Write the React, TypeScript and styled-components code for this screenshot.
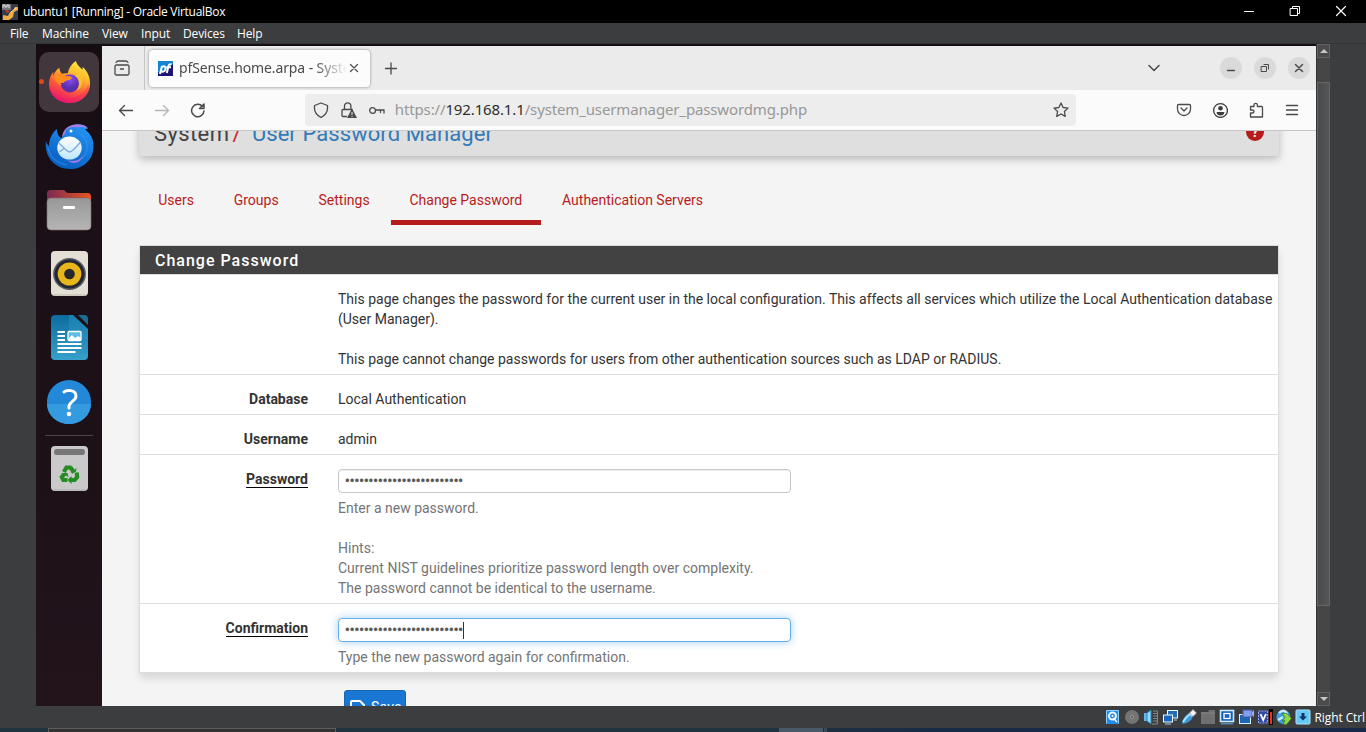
import React from "react";
import styled, { createGlobalStyle } from "styled-components";

const GlobalStyle = createGlobalStyle`
  * { box-sizing: border-box; }
  html, body { margin: 0; padding: 0; background: #3c3d3f; overflow: hidden; }
  svg { display: block; flex: none; }
`;

const ui = `"Open Sans", "Noto Sans", sans-serif`;
const ubuntu = `"Noto Sans", "Open Sans", sans-serif`;

const Host = styled.div`
  width: 1366px; height: 732px; display: flex; flex-direction: column;
  background: #3c3d3f; color: #fff; font-family: ${ui}; overflow: hidden;
`;
const TitleBar = styled.header`
  height: 23px; flex: none; background: #000; display: flex; align-items: center;
  padding: 0 19px 0 2px; font-size: 12px; letter-spacing: -0.28px;
`;
const TitleText = styled.span`margin-left: 5px; flex: 1; line-height: 23px; white-space: nowrap;`;
const TitleButtons = styled.div`display: flex; gap: 34px; align-items: center; height: 20px; margin-top: -2px;`;
const MenuBar = styled.nav`
  height: 21px; flex: none; display: flex; background: #3c3d3f; border-bottom: 1px solid #343537;
  font-size: 12px; padding-left: 10px; line-height: 21px;
`;
const MenuItem = styled.span<{ $w: number; $ls?: number }>`
  width: ${p => p.$w}px; letter-spacing: ${p => p.$ls ?? -0.13}px; white-space: nowrap;
`;
const Viewport = styled.div`height: 662px; flex: none; display: flex; padding-left: 36px;`;
const Desktop = styled.div`
  width: 1280px; display: flex; background: linear-gradient(#160d13, #1c1018 30%, #1d1118 65%, #23141c);
`;
const Dock = styled.aside`
  width: 66px; padding-top: 8px; display: flex; flex-direction: column; align-items: center; gap: 4px;
`;
const DockItem = styled.div<{ $active?: boolean; $lift?: number }>`
  width: 60px; height: 60px; border-radius: 10px; display: flex; align-items: center; justify-content: center;
  position: relative; background: ${p => (p.$active ? "#42373d" : "transparent")};
  padding-bottom: ${p => p.$lift ?? 0}px;
`;
const ActiveDot = styled.i`
  position: absolute; left: 0; top: 27px; width: 5px; height: 5px; border-radius: 50%; background: #dd4814;
`;
const DockRule = styled.div`width: 48px; height: 1px; background: #4c4348; margin: -1px 0 0;`;

const Browser = styled.main`
  width: 1214px; margin-top: 2px; height: 660px; display: flex; flex-direction: column; overflow: hidden;
  background: #f4f4f4; color: #212529;
`;
const TabStrip = styled.div`height: 44px; flex: none; background: #ebebeb; display: flex; align-items: center;`;
const ViewButton = styled.div`
  width: 43px; height: 44px; border-right: 1px solid #c4c4c4; display: flex; align-items: center; padding-left: 12px;
`;
const Tab = styled.div`
  width: 221px; height: 37px; margin: 0 0 0 4px; background: #fcfcfc; border-radius: 4px;
  box-shadow: 0 0 3px rgba(0,0,0,.42); display: flex; align-items: center; padding-left: 9px;
  font: 14px/36px ${ubuntu}; color: #4b4b4b;
`;
const TabTitle = styled.span`
  width: 167px; margin-left: 6px; overflow: hidden; white-space: nowrap; letter-spacing: -.11px;
  mask-image: linear-gradient(90deg, #000 136px, transparent 168px);
`;
const NewTab = styled.div`margin-left: 13px; flex: 1;`;
const WindowButtons = styled.div`display: flex; gap: 12px; margin-left: 58px; padding-right: 6px;`;
const RoundButton = styled.div`
  width: 22px; height: 22px; border-radius: 50%; background: #dadada; display: flex; align-items: center; justify-content: center;
`;
const Toolbar = styled.div`
  height: 41px; flex: none; background: #fbfbfb; border-bottom: 1px solid #c6c6c6; display: flex; align-items: center;
  padding: 0 16px;
`;
const NavButtons = styled.div`display: flex; gap: 20px; width: 187px;`;
const UrlBar = styled.div`
  width: 772px; height: 32px; background: #ededed; border-radius: 4px; display: flex; align-items: center;
  padding: 0 7px 0 8px; color: #5b5b5b;
`;
const UrlIcons = styled.div`display: flex; gap: 12px; width: 82px;`;
const Url = styled.span`
  flex: 1; font: 15px/30px ${ubuntu}; color: #989898; letter-spacing: -.135px; white-space: nowrap; height: 32px;
  b { font-weight: 400; color: #2d2d2d; }
`;
const ToolIcons = styled.div`display: flex; gap: 20px; margin-left: 100px;`;

const Page = styled.div`
  flex: 1; min-height: 0; overflow: hidden; padding: 0 37px; font: 14px/20px Roboto, sans-serif; color: #212121;
`;
const PageHeader = styled.div`
  margin-top: -24px; height: 49px; background: #dfdfdf; border-radius: 0 0 3px 3px;
  box-shadow: 0 3px 8px rgba(0,0,0,.25); display: flex; justify-content: space-between; align-items: center;
  padding: 3px 15px 0;
`;
const Crumbs = styled.h1`
  margin: 1px 0 0; padding-top: 1px; font: 400 22px/26px Roboto, sans-serif; letter-spacing: .4px; color: #424242; display: flex;
`;
const Slash = styled.span`color: #c62828; margin: 0 10px 0 3px;`;
const Crumb = styled.span`color: #337ab7; letter-spacing: .07px;`;
const HelpBadge = styled.div`
  width: 18px; height: 18px; border-radius: 50%; background: #b71c1c; color: #eee; font: 700 14px/18px Roboto, sans-serif;
  text-align: center; margin: -2px 0 0;
`;
const Tabs = styled.nav`display: flex; gap: 2.65px; margin: 19px 0 0 .6px; height: 50px;`;
const PageTab = styled.a<{ $on?: boolean }>`
  padding: 15px 18.6px 0; color: #b71c1c; white-space: nowrap;
  border-bottom: 5px solid ${p => (p.$on ? "#b71c1c" : "transparent")};
`;
const Panel = styled.section`
  margin-top: 20px; border: 1px solid #dcdcdc; background: #fff; box-shadow: 0 6px 8px -1px rgba(0,0,0,.13);
`;
const PanelTitle = styled.h2`
  margin: 0; height: 29px; border-bottom: 1px solid #dcdcdc; background: #424242; color: #fff;
  font: 500 16px/28px Roboto, sans-serif; letter-spacing: 1px; padding: 1px 0 0 15px;
`;
const Row = styled.div`
  display: grid; grid-template-columns: 168px 1fr; column-gap: 30px; padding: 14px 4px 5px 0;
  border-bottom: 1px solid #dedede;
  &:last-child { border-bottom: 0; }
`;
const Label = styled.div`text-align: right; font-weight: 700; color: #333;`;
const Required = styled.span`border-bottom: 1px solid #000;`;
const Value = styled.div`white-space: pre-line; color: #333;`;
const Field = styled.div<{ $focus?: boolean }>`
  width: 453px; height: 24px; border-radius: 4px; background: #fff; color: #555; padding: 0 6px; line-height: 21px;
  display: flex; align-items: center; border: 1px solid ${p => (p.$focus ? "#66afe9" : "#c8c8c8")};
  box-shadow: ${p => (p.$focus ? "0 0 8px rgba(102,175,233,.6)" : "inset 0 1px 1px rgba(0,0,0,.075)")};
  -webkit-text-stroke: .5px #555;
`;
const Caret = styled.i`width: 1px; height: 17px; background: #333;`;
const Hint = styled.div`margin-top: 5px; color: #757575; white-space: pre-line;`;
const SaveButton = styled.button`
  margin: 17px 0 0 205px; width: 62px; height: 34px; border: 1px solid #1565b0; border-radius: 3px; background: #1976d2;
  color: #fff; font: 14px/20px Roboto, sans-serif; padding: 0 4px; display: flex; align-items: center; gap: 6px;
  letter-spacing: .2px;
`;

const ScrollTrack = styled.div`
  width: 14px; background: #464646; border-left: 1px solid #323232; display: flex; flex-direction: column;
`;
const ScrollArrow = styled.div`
  height: 14px; border: 1px solid #626262; background: #4b4b4b; display: flex; align-items: center; justify-content: center;
`;
const ScrollThumb = styled.div`
  height: 524px; margin: 24px 0 auto; border: 1px solid #666; background: linear-gradient(90deg, #4b4c4d, #545556);
`;
const StatusBar = styled.footer`
  height: 22px; flex: none; display: flex; align-items: center; padding-left: 1104.500px; gap: 3.100px;
  font-size: 12px; background: #3c3d3f;
`;
const HostKey = styled.span`white-space: nowrap; letter-spacing: -.1px; line-height: 20px; padding-top: 1px;`;
const Taskbar = styled.div`height: 4px; flex: none; display: flex; background: linear-gradient(90deg, #20343f, #20343f 55%, #172a46 70%, #182848);`;
const TaskSlot = styled.div`margin-left: 48px; width: 288px; border: 1px solid #5e5e5e; border-bottom: 0; background: #333232;`;
const TaskActive = styled.div`margin-left: 443px; width: 44px; background: #4a5968;`;
const TaskEdge = styled.div`margin-left: 1px; width: 3px; background: #3c4a58;`;

const Line = ({ d, size = 16, w = 1.3, c = "#4a4a4a" }: { d: string; size?: number; w?: number; c?: string }) => (
  <svg width={size} height={size} viewBox={`0 0 ${size} ${size}`} fill="none" stroke={c} strokeWidth={w} strokeLinecap="round" strokeLinejoin="round">
    <path d={d} />
  </svg>
);

const FirefoxIcon = () => (
  <svg width="43" height="44" viewBox="0 0 44 46" preserveAspectRatio="none">
    <defs>
      <linearGradient id="ffBody" x1=".8" y1="0" x2=".35" y2="1">
        <stop offset="0" stopColor="#fff04a" /><stop offset=".35" stopColor="#ffb52b" />
        <stop offset=".65" stopColor="#ff5b38" /><stop offset="1" stopColor="#e9136f" />
      </linearGradient>
      <radialGradient id="ffOrb" cx=".5" cy=".25"><stop offset="0" stopColor="#8b50f5" /><stop offset="1" stopColor="#5a2fae" /></radialGradient>
    </defs>
    <path d="M28.500 1c.8 4 4.200 6.500 6.700 9 .5-1 .3-2 0-3 5.500 5 8 11 7.800 18C42.600 36.500 33.500 45 22 45S1 36.500 1 25c0-5 1.700-9.500 4.500-12.500V17c1-4 3-7.500 6.200-9 0 2.800 1 4.800 2.700 6.500 2-.7 4-.8 6-.6C21 9 24 4 28.500 1z" fill="url(#ffBody)" />
    <path d="M1.500 28c3 9 11 13 20 12C32 38.500 39 33 41 25c3 8-4 19.500-18 19.500C11 44.500 3 38 1.500 28z" fill="#f1166f" opacity=".38" />
    <circle cx="22.500" cy="24.500" r="9.500" fill="url(#ffOrb)" />
    <path d="M6 17c4-3 9-3 12 0 3-1 6 0 6.500 2-1 2-5 1.700-7 3.500-2 2-4 2-6 1l3 3c-4-.5-8-4-8.500-9.500z" fill="#ff8d20" />
    <path d="M26 7c5 5 9 9 9 16 0 5-3 8-6 9 4-5 3-12-1-15 2-1 1-6-2-10z" fill="#ffc734" opacity=".75" />
  </svg>
);
const ThunderbirdIcon = () => (
  <svg width="49" height="47" viewBox="0 0 49 47">
    <defs>
      <linearGradient id="tbBody" x1=".8" y1="0" x2=".3" y2="1"><stop offset="0" stopColor="#2594f5" /><stop offset="1" stopColor="#075cbf" /></linearGradient>
      <linearGradient id="tbMail" x1="0" y1="0" x2="0" y2="1"><stop offset="0" stopColor="#fff" /><stop offset="1" stopColor="#bfe6ff" /></linearGradient>
    </defs>
    <path d="M1 18c.5 3 2 4 3 5C4 16 7 10 12 6c0 4 1 7 4 9 4-2 3-12 16-13.500 5-.5 9 .5 11 4-1 0-2 .2-3 .7 6 5 8.500 10 8.500 17C48.500 37 38 46 25 46 9 46-1 33 1 18z" fill="url(#tbBody)" />
    <path d="M17 14C18 6 24 1 33 1.200c5 .2 8 1.600 10 4.300-4-1.700-7-2-10-1-3-1-8-1-11 2-2 2-1 5-5 7.500z" fill="#a37ee9" />
    <path d="M36 11c9 7 7 18 1 25M3 25c2 9 8 15 19 17" fill="none" stroke="#45a5ff" strokeWidth="1.500" opacity=".35" />
    <path d="M22 37c6 2 13 1 16-5-1 7-9 11-16 5z" fill="#9979df" />
    <ellipse cx="24.500" cy="25" rx="12.200" ry="11.500" fill="url(#tbMail)" />
    <path d="M14 20c4 4 8 9 10.500 9s7-5 11-10M14 29l6-4" fill="none" stroke="#7eabd8" strokeWidth="1.300" />
    <circle cx="26" cy="8" r="1.500" fill="#fff" />
  </svg>
);
const FilesIcon = () => (
  <svg width="46" height="42" viewBox="0 0 46 42">
    <defs>
      <linearGradient id="fiBack"><stop offset="0" stopColor="#7b2a55" /><stop offset="1" stopColor="#e95420" /></linearGradient>
      <linearGradient id="fiFront" x1="0" y1="0" x2="0" y2="1"><stop offset="0" stopColor="#989898" /><stop offset="1" stopColor="#b5b5b5" /></linearGradient>
    </defs>
    <path d="M1 5c0-3 1-4 4-4h12c2 0 3 3 5 3h19c3 0 4 1 4 4v15H1z" fill="url(#fiBack)" />
    <rect x="1" y="9" width="44" height="32" rx="4" fill="url(#fiFront)" stroke="#81716c" strokeWidth=".6" />
    <rect x="17" y="17" width="12" height="3" rx="1" fill="#fff" />
  </svg>
);
const MusicIcon = () => (
  <svg width="37" height="45" viewBox="0 0 36 45" preserveAspectRatio="none">
    <rect width="36" height="45" rx="4" fill="#e4dfd5" /><path d="M2 44h32" stroke="#bbb5aa" />
    <circle cx="18" cy="23" r="16" fill="#5a5e66" /><circle cx="18" cy="23" r="14.500" fill="#242631" />
    <circle cx="18" cy="23" r="11.500" fill="#e7b51c" /><circle cx="18" cy="23" r="5.200" fill="#282828" />
  </svg>
);
const WriterIcon = () => (
  <svg width="37" height="45" viewBox="0 0 37 45">
    <defs><linearGradient id="wr" x1="0" y1="0" x2="0" y2="1"><stop offset="0" stopColor="#0d6c9e" /><stop offset="1" stopColor="#37a0cd" /></linearGradient></defs>
    <path d="M4 0h18l15 14v27q0 4-4 4H4q-4 0-4-4V4q0-4 4-4z" fill="url(#wr)" />
    <path d="M18 0h4l15 14v10H18z" fill="#2994c2" opacity=".5" />
    <path d="M27 0h6q4 0 4 4v6z" fill="#176d94" />
    <path d="M6.500 17h7.500M6.500 21h7.500M6.500 25h7.500M6.500 29h24M6.500 33h24M6.500 37h18" stroke="#fff" strokeWidth="2" />
    <rect x="17" y="16.500" width="13" height="9" rx="1" fill="#5bbce9" stroke="#fff" strokeWidth="1.300" />
    <path d="M18 25v-2l3-3 3 3 3-2 3 2v2z" fill="#fff" />
  </svg>
);
const HelpIcon = () => (
  <svg width="44" height="44" viewBox="0 0 44 44">
    <circle cx="22" cy="22" r="22" fill="#2488d9" /><path d="M0 24h44a22 20 0 0 1-44 0z" fill="#349be1" />
    <path d="M17 12c2-2 12-3 12 4 0 5-6 5-7 10v2" fill="none" stroke="#fff" strokeWidth="3" strokeLinecap="round" /><circle cx="22" cy="34" r="2.300" fill="#fff" />
  </svg>
);
const TrashIcon = () => (
  <svg width="37" height="45" viewBox="0 0 36 45" preserveAspectRatio="none">
    <rect width="36" height="45" rx="4" fill="#cacaca" /><path d="M2 44h32" stroke="#aaa" />
    <rect x="3" y="3" width="30" height="6" rx="2.500" fill="#777" />
    <g transform="translate(18 28)" fill="none" stroke="#268b22" strokeWidth="4">
      <path d="M-5.500-2-3-6.500H2" /><path d="M1-6.500l3.500 5" /><path d="M7-1.500 7.500 3 5 6H1" /><path d="M-2 6h-4L-7.500 3-5 0" />
      <path d="M1-1 6-2 7-6zM2 2v8l-4-4zM-8-1h6l1 4z" fill="#268b22" stroke="none" />
    </g>
  </svg>
);
const VBoxIcon = () => (
  <svg width="16" height="16" viewBox="0 0 16 16">
    <rect width="16" height="16" fill="#343b4b" /><rect width="9" height="6" fill="#777" />
    <path d="M1 4V1h2v2h2V1h2v3" fill="none" stroke="#ddd" /><path d="M1 11l5 1 2-4 3-1 2-4h3v3l-4 2-1 5-4 3H1z" fill="#efae45" />
    <path d="M3 6l5 1-3 2z" fill="#d23e25" /><path d="M9 8l5-4" stroke="#ffe38b" />
  </svg>
);
const PfIcon = () => (
  <svg width="15" height="15" viewBox="0 0 15 15">
    <rect width="15" height="15" fill="#1685d1" /><path d="M0 15 15 3v12z" fill="#1c1672" /><path d="M0 11l5 4H0z" fill="#1c1672" />
    <path d="M2 13 4 5M3.700 6c3-2 4.500 0 3.500 3-.6 2-2.800 2-4.200 1M8.800 12l1.800-7.200q.5-2 3-1.600M8.500 6.200h4.500" fill="none" stroke="#fff" strokeWidth="2" />
  </svg>
);

const statusIcons: React.ReactNode[] = [
  <><rect x="1" y="1" width="13" height="14" rx="1" fill="#1f8be6" /><path d="M1.500 14.500v-13h12v13" stroke="#8fd0ff" fill="none" /><circle cx="7.500" cy="7" r="4.500" fill="#e8f5ff" /><circle cx="7.500" cy="7" r="1.800" fill="none" stroke="#177acf" strokeWidth="1.300" /><path d="M8 9l4 4" stroke="#fff" strokeWidth="1.500" /></>,
  <><circle cx="8" cy="8" r="7" fill="#747474" /><circle cx="8" cy="8" r="2" fill="#929292" /><circle cx="8" cy="8" r=".8" fill="#333" /></>,
  <><path d="M1 4h3v8H1z" fill="#64b6e8" /><path d="M4 4l4-3v14l-4-3z" fill="#8fdcff" stroke="#2585bd" /><path d="M10 2h4.500v13H9M10 4.500h4M10 7h4M10 9.500h4M10 12h4" stroke="#858585" fill="none" /></>,
  <><rect x="5.500" y="1.500" width="10" height="7.500" fill="#286db8" stroke="#eef8ff" /><rect x="1.500" y="6" width="9" height="7" fill="#1a66bd" stroke="#eef8ff" /><path d="M3 15h6M12 11h3" stroke="#a6d0ee" /></>,
  <><path d="M1 15q0-6 7-11l4 4q-3 6-11 7z" fill="#3b9bdd" /><path d="M2 13q3-5 7-8l2 2" fill="none" stroke="#a4dfff" strokeWidth="2" /><path d="M8.500 4l3.500-3.500L15.500 4 12 7.500z" fill="#f4f4f4" stroke="#999" strokeWidth=".7" /></>,
  <><path d="M1 3h7l1-2h6v14H1z" fill="#707070" /><path d="M1 4h14" stroke="#838383" /></>,
  <><rect x="1.500" y="1.500" width="13" height="11" fill="#155eb2" stroke="#c8ecff" strokeWidth="1.600" /><rect x="5" y="4.500" width="6" height="5" fill="#1767bd" stroke="#fff" strokeWidth="1.300" /><path d="M2 14.800h12" stroke="#65aee3" /></>,
  <><rect x="1.500" y="5.500" width="11" height="9" fill="#1e66b4" stroke="#d9eef8" /><rect x="5" y="1" width="9" height="7" fill="#879cf0" stroke="#435c9c" /><path d="M14 3l2-2v7l-2-2" fill="#9baeff" /></>,
  <><path d="M1.500 2h9v12h-9z" fill="#3149a0" stroke="#8fa6fd" strokeDasharray="2 1" /><path d="M3.500 5l2.700 6 2.700-6" stroke="#fff" strokeWidth="1.800" fill="none" /><path d="M12 0h4v16h-4z" fill="#000" /><path d="M13 3h2v12h-2z" fill="#ff2e13" /></>,
  <><circle cx="7.500" cy="8" r="7" fill="#3c9de0" /><path d="M3 4c4-4 7-2 8 1M2 11l5-3" stroke="#c3edff" strokeWidth="2.400" fill="none" /><path d="M6 4.500h5l4.500 5-5 6H7l2-4-3 .5 3-3.500z" fill="#91d844" stroke="#2a762a" strokeWidth=".7" /></>,
  <><rect x="1" y="1" width="14" height="14" rx="1" fill="#67c8f4" stroke="#aae6ff" /><path d="M6.500 4h3v3.500h2.500l-4 4-4-4h2.500z" fill="#0b3566" /></>,
];

const dots = "•".repeat(25);
const pageTabs = ["Users", "Groups", "Settings", "Change Password", "Authentication Servers"];

export default function App() {
  return (
    <Host>
      <GlobalStyle />
      <TitleBar>
        <VBoxIcon />
        <TitleText>ubuntu1 [Running] - Oracle VirtualBox</TitleText>
        <TitleButtons>
          <Line size={12} c="#fff" w={1} d="M1.500 6.500h9" />
          <Line size={12} c="#fff" w={1} d="M1.500 3.500h7v7h-7zM3.500 3V1.500h7v7H9" />
          <Line size={12} c="#fff" w={1.200} d="M1.500 1.500l9 9M10.500 1.500l-9 9" />
        </TitleButtons>
      </TitleBar>
      <MenuBar>
        <MenuItem $w={32}>File</MenuItem>
        <MenuItem $w={60}>Machine</MenuItem>
        <MenuItem $w={39}>View</MenuItem>
        <MenuItem $w={42}>Input</MenuItem>
        <MenuItem $w={54}>Devices</MenuItem>
        <MenuItem $w={40}>Help</MenuItem>
      </MenuBar>
      <Viewport>
        <Desktop>
          <Dock>
            <DockItem $active $lift={1}><ActiveDot /><FirefoxIcon /></DockItem>
            <DockItem><ThunderbirdIcon /></DockItem>
            <DockItem><FilesIcon /></DockItem>
            <DockItem $lift={1}><MusicIcon /></DockItem>
            <DockItem $lift={1}><WriterIcon /></DockItem>
            <DockItem><HelpIcon /></DockItem>
            <DockRule />
            <DockItem $lift={3}><TrashIcon /></DockItem>
          </Dock>
          <Browser>
            <TabStrip>
              <ViewButton><Line d="M2.500 5h11q1.500 0 1.500 1.500v7q0 1.500-1.500 1.500h-11Q1 15 1 13.500v-7Q1 5 2.500 5zM2 2.500Q3 1 4 1h8q1 0 2 1.500M6.500 9h3" /></ViewButton>
              <Tab>
                <PfIcon />
                <TabTitle>pfSense.home.arpa - System: User</TabTitle>
                <Line size={16} w={1.200} d="M4.500 4.500l7 7M11.500 4.500l-7 7" />
              </Tab>
              <NewTab><Line w={1.300} d="M2.500 8.500h11M8 3v11" /></NewTab>
              <Line w={1.500} d="M3 5.500l5 5 5-5" />
              <WindowButtons>
                <RoundButton><Line d="M4.500 10.500h7" /></RoundButton>
                <RoundButton><Line w={1} d="M4.500 6.500h5v5h-5zM7 4.500h4.500V9" /></RoundButton>
                <RoundButton><Line w={1.500} d="M4.500 4.500l7 7M11.500 4.500l-7 7" /></RoundButton>
              </WindowButtons>
            </TabStrip>
            <Toolbar>
              <NavButtons>
                <Line w={1.400} d="M14.500 8.500h-13M6.500 3.500l-5 5 5 5" />
                <Line w={1.400} c="#b5b5b5" d="M1.500 8.500h13M9.500 3.500l5 5-5 5" />
                <Line w={1.500} d="M14 9A6.200 6.200 0 1 1 12.500 4.500M14 2v4.500H9.500z" />
              </NavButtons>
              <UrlBar>
                <UrlIcons>
                  <Line d="M8 1l6.500 2.500v3c0 4-3 7-6.500 9-3.500-2-6.500-5-6.500-9v-3z" />
                  <svg width="16" height="16" viewBox="0 0 16 16"><path d="M3.500 7V4a3.200 3.200 0 0 1 6.400 0v3M6 14.500H2q-1 0-1-1v-5q0-1 1-1h9.500" fill="none" stroke="#4a4a4a" strokeWidth="1.300" /><path d="M11 6.500 16 16H6z" fill="#4a4a4a" /><path d="M11 10v3M11 14v1" stroke="#eee" /></svg>
                  <Line d="M6.500 8.500a2.900 2.900 0 1 1-5.800 0a2.900 2.900 0 1 1 5.800 0zM6.500 8H15v3M11.500 8v2.500" />
                </UrlIcons>
                <Url>https://<b>192.168.1.1</b>/system_usermanager_passwordmg.php</Url>
                <Line d="M8 1l2.100 4.500 4.900.6-3.600 3.400.9 4.900L8 12l-4.300 2.400.9-4.900L1 6.100l4.900-.6z" />
              </UrlBar>
              <ToolIcons>
                <Line d="M2.500 2.500h11q1 0 1 1V7a6.500 6.500 0 0 1-13 0V3.500q0-1 1-1zM5 6l3 3 3-3" />
                <svg width="16" height="16" viewBox="0 0 16 16"><circle cx="8.500" cy="8.500" r="6.900" fill="none" stroke="#3c3c3c" strokeWidth="1.300" /><circle cx="8.500" cy="6.300" r="2.300" fill="#3c3c3c" /><path d="M4.500 10h8q-.5 3.500-4 3.500T4.500 10z" fill="#3c3c3c" /></svg>
                <Line d="M2.500 4.500H6V3a1.700 1.700 0 0 1 3.400 0v1.500h4.100q1 0 1 1V15h-12v-4h2a1.500 1.500 0 0 0 0-3h-2z" />
                <Line w={1.400} d="M2.500 3.500h11M2.500 8h11M2.500 12.500h11" />
              </ToolIcons>
            </Toolbar>
            <Page>
              <PageHeader>
                <Crumbs>System<Slash>/</Slash><Crumb>User Password Manager</Crumb></Crumbs>
                <HelpBadge>?</HelpBadge>
              </PageHeader>
              <Tabs>{pageTabs.map(t => <PageTab key={t} $on={t === "Change Password"}>{t}</PageTab>)}</Tabs>
              <Panel>
                <PanelTitle>Change Password</PanelTitle>
                <Row>
                  <Label />
                  <Value>{"This page changes the password for the current user in the local configuration. This affects all services which utilize the Local Authentication database\n(User Manager).\n\nThis page cannot change passwords for users from other authentication sources such as LDAP or RADIUS."}</Value>
                </Row>
                <Row><Label>Database</Label><Value>Local Authentication</Value></Row>
                <Row><Label>Username</Label><Value>admin</Value></Row>
                <Row>
                  <Label><Required>Password</Required></Label>
                  <div>
                    <Field>{dots}</Field>
                    <Hint>{"Enter a new password.\n\nHints:\nCurrent NIST guidelines prioritize password length over complexity.\nThe password cannot be identical to the username."}</Hint>
                  </div>
                </Row>
                <Row>
                  <Label><Required>Confirmation</Required></Label>
                  <div>
                    <Field $focus>{dots}<Caret /></Field>
                    <Hint>Type the new password again for confirmation.</Hint>
                  </div>
                </Row>
              </Panel>
              <SaveButton>
                <Line c="#fff" w={2} d="M3 2h8l4 4v7q0 1-1 1H3q-1 0-1-1V3q0-1 1-1z" />Save
              </SaveButton>
            </Page>
          </Browser>
        </Desktop>
        <ScrollTrack>
          <ScrollArrow><svg width="8" height="4" viewBox="0 0 8 4"><path d="M0 4l4-4 4 4z" fill="#c5c5c5" /></svg></ScrollArrow>
          <ScrollThumb />
          <ScrollArrow><svg width="8" height="4" viewBox="0 0 8 4"><path d="M0 0h8L4 4z" fill="#c5c5c5" /></svg></ScrollArrow>
        </ScrollTrack>
      </Viewport>
      <StatusBar>
        {statusIcons.map((icon, i) => <svg key={i} width="16" height="16" viewBox="0 0 16 16">{icon}</svg>)}
        <HostKey>Right Ctrl</HostKey>
      </StatusBar>
      <Taskbar><TaskSlot /><TaskActive /><TaskEdge /></Taskbar>
    </Host>
  );
}
